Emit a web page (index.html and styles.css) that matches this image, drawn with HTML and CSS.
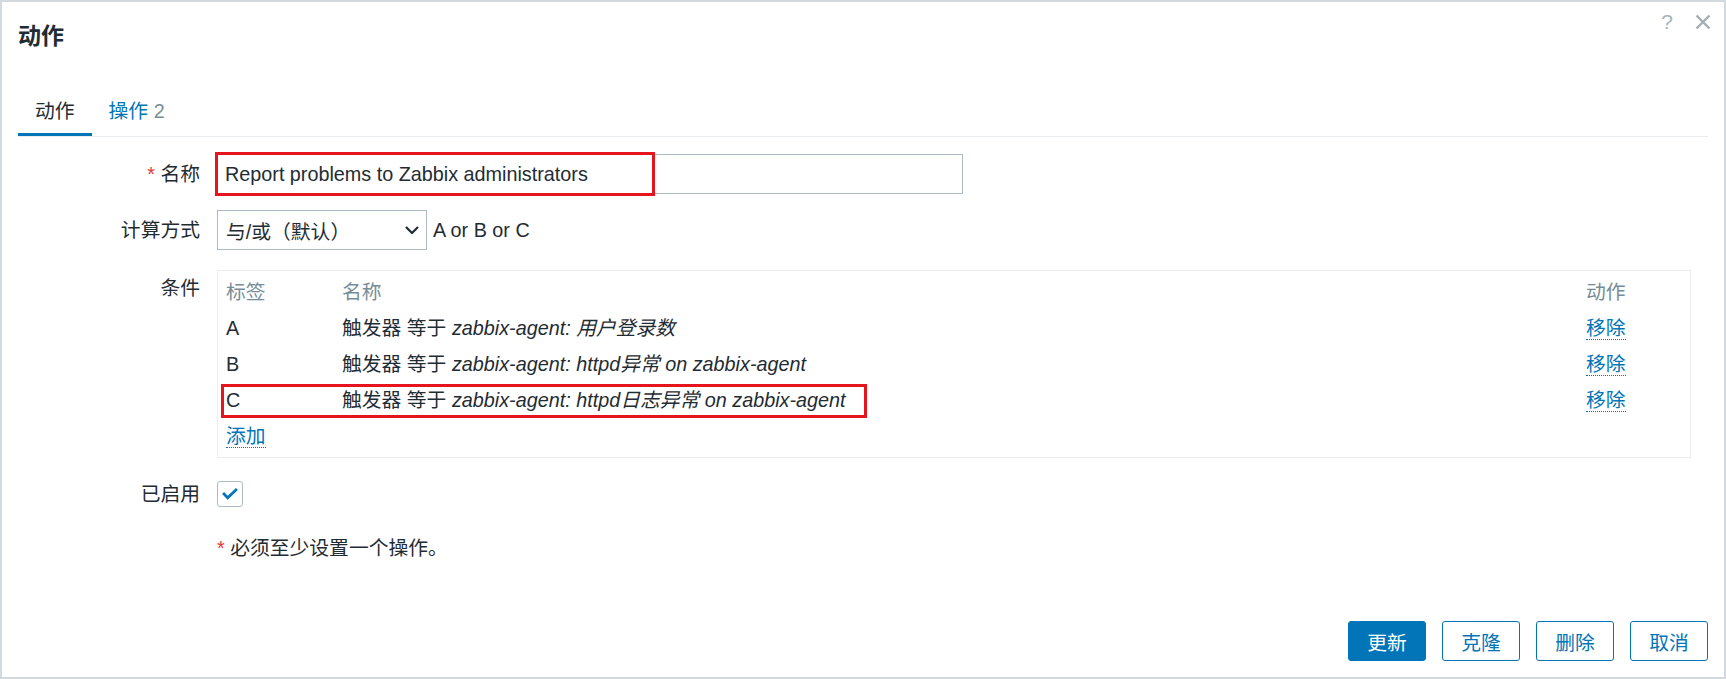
FILE: index.html
```html
<!DOCTYPE html>
<html lang="zh-CN">
<head>
<meta charset="utf-8">
<title>动作</title>
<link rel="stylesheet" href="styles.css">
</head>
<body>
<div class="dialog">
  <div class="dlg-head">
    <h4 class="dlg-title">动作</h4>
    <div class="dlg-tools">
      <span class="help">?</span>
      <svg class="close" viewBox="0 0 16 16"><path d="M1.5 1.5 L14.5 14.5 M14.5 1.5 L1.5 14.5"/></svg>
    </div>
  </div>
  <div class="dlg-body">
    <ul class="tabs">
      <li class="tab active">动作</li>
      <li class="tab">操作 <span class="count">2</span></li>
    </ul>
    <div class="form">
      <div class="lbl"><span class="req">*</span> 名称</div>
      <div class="field">
        <div class="textbox">Report problems to Zabbix administrators<span class="mark mark-name"></span></div>
      </div>

      <div class="lbl">计算方式</div>
      <div class="field field-inline">
        <div class="select"><span>与/或（默认）</span><svg class="chev" viewBox="0 0 14 8"><path d="M1 1 L7 7 L13 1"/></svg></div>
        <span class="formula">A or B or C</span>
      </div>

      <div class="lbl lbl-cond">条件</div>
      <div class="field field-cond">
        <div class="cond">
          <div class="crow chead"><span>标签</span><span>名称</span><span>动作</span></div>
          <div class="crow"><span>A</span><span>触发器 等于 <i>zabbix-agent: 用户登录数</i></span><span><a class="link">移除</a></span></div>
          <div class="crow"><span>B</span><span>触发器 等于 <i>zabbix-agent: httpd异常 on zabbix-agent</i></span><span><a class="link">移除</a></span></div>
          <div class="crow"><span>C</span><span>触发器 等于 <i>zabbix-agent: httpd日志异常 on zabbix-agent</i></span><span><a class="link">移除</a></span><span class="mark mark-row"></span></div>
          <div class="crow"><span><a class="link">添加</a></span></div>
        </div>
      </div>

      <div class="lbl">已启用</div>
      <div class="field field-inline">
        <span class="checkbox"><svg viewBox="0 0 26 26"><path d="M5.5 12 L10.5 17 L20.5 7.5"/></svg></span>
      </div>

      <div class="lbl"></div>
      <div class="field note"><span class="req">*</span> 必须至少设置一个操作。</div>
    </div>
  </div>
  <div class="dlg-foot">
    <button class="btn primary">更新</button>
    <button class="btn">克隆</button>
    <button class="btn">删除</button>
    <button class="btn">取消</button>
  </div>
</div>
</body>
</html>
```

FILE: styles.css
```css
* { box-sizing: border-box; }
html, body { margin: 0; padding: 0; background: #fff; }
body {
  font-family: "Liberation Sans", Arial, "Noto Sans CJK SC", sans-serif;
  font-size: 19.8px;
  color: #1f2c33;
}
.dialog {
  width: 1726px;
  height: 679px;
  border: 2px solid #d3dadd;
  display: flex;
  flex-direction: column;
  background: #fff;
}
.dlg-head {
  display: flex;
  justify-content: space-between;
  align-items: flex-start;
  padding: 8px 13px 0 16px;
}
.dlg-title {
  margin: 12px 0 0;
  font-size: 23px;
  line-height: 28px;
  font-weight: bold;
  color: #1f2c33;
}
.dlg-tools {
  display: flex;
  align-items: center;
  gap: 22px;
  height: 24px;
}
.help { font-size: 21px; line-height: 24px; color: #a8b4ba; }
.close { width: 16px; height: 16px; stroke: #a3adb2; stroke-width: 2.4; fill: none; }
.dlg-body { flex: 1; padding: 49px 16px 0 16px; }
.tabs {
  list-style: none;
  margin: 0;
  padding: 0;
  display: flex;
  border-bottom: 1px solid #ebeef0;
}
.tab {
  padding: 0 17px 10px;
  line-height: 24px;
  border-bottom: 3px solid transparent;
  color: #0275b8;
}
.tab.active { color: #1f2c33; border-bottom-color: #0275b8; }
.count { color: #768d99; }
.form {
  display: grid;
  grid-template-columns: 182px 1fr;
  column-gap: 17px;
  row-gap: 16px;
  padding-top: 17px;
}
.lbl { text-align: right; line-height: 40px; min-height: 40px; }
.req { color: #e33734; }
.field { position: relative; min-height: 40px; }
.field-inline { display: flex; align-items: center; gap: 6px; }
.textbox {
  position: relative;
  width: 746px;
  height: 40px;
  border: 1px solid #acbbc2;
  padding: 0 7px;
  line-height: 38px;
}
.mark { position: absolute; border: 3px solid #e5141d; pointer-events: none; }
.mark-name { left: -3px; top: -3px; width: 440px; height: 44px; }
.select {
  width: 210px;
  height: 40px;
  border: 1px solid #acbbc2;
  display: flex;
  align-items: center;
  justify-content: space-between;
  padding: 0 7px 0 8px;
}
.chev { width: 14px; height: 8px; fill: none; stroke: #1f2c33; stroke-width: 2.2; }
.lbl-cond, .field-cond { margin-top: 4px; }
.lbl-cond { line-height: 36px; }
.cond {
  width: 1474px;
  border: 1px solid #ebeef0;
  padding: 3px 0 3px 8px;
}
.crow {
  position: relative;
  display: grid;
  grid-template-columns: 116px 1fr 104px;
  height: 36px;
  line-height: 36px;
  white-space: nowrap;
}
.chead { color: #768d99; }
.link {
  color: #0275b8;
  border-bottom: 1px dotted #0275b8;
  text-decoration: none;
  cursor: pointer;
}
.mark-row { left: -5px; top: 2px; width: 646px; height: 34px; }
.checkbox {
  width: 26px;
  height: 26px;
  border: 1px solid #acbbc2;
  border-radius: 3px;
  display: inline-block;
}
.checkbox svg { display: block; width: 24px; height: 24px; fill: none; stroke: #0275b8; stroke-width: 3; }
.note { line-height: 36px; }
.dlg-foot {
  display: flex;
  justify-content: flex-end;
  gap: 16px;
  padding: 0 16px 16px 16px;
}
.btn {
  width: 78px;
  height: 40px;
  border: 1px solid #0275b8;
  border-radius: 3px;
  background: #fff;
  color: #0275b8;
  font-family: inherit;
  font-size: 19.8px;
  padding: 0;
}
.btn.primary { background: #0275b8; color: #fff; }
```
